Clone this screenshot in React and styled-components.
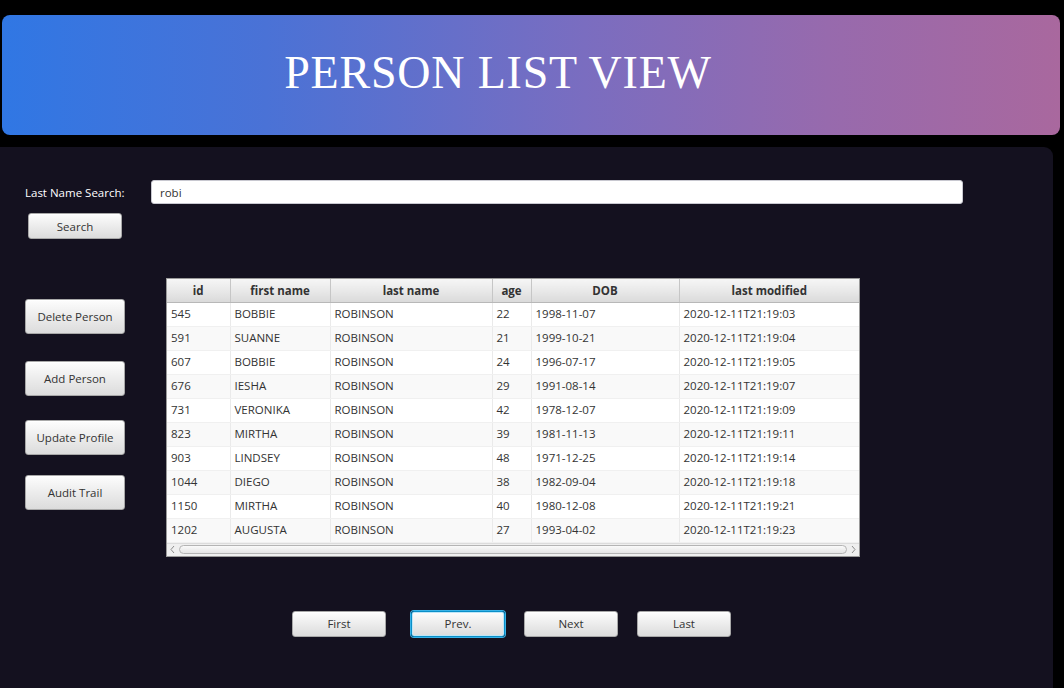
import React from 'react';
import styled, { createGlobalStyle, css } from 'styled-components';

const GlobalStyle = createGlobalStyle`
  html, body {
    margin: 0;
    padding: 0;
    background: #000;
  }
  body {
    font-family: "Open Sans", "Noto Sans", sans-serif;
  }
  * {
    box-sizing: border-box;
  }
`;

const people = [
  ['545', 'BOBBIE', 'ROBINSON', '22', '1998-11-07', '2020-12-11T21:19:03'],
  ['591', 'SUANNE', 'ROBINSON', '21', '1999-10-21', '2020-12-11T21:19:04'],
  ['607', 'BOBBIE', 'ROBINSON', '24', '1996-07-17', '2020-12-11T21:19:05'],
  ['676', 'IESHA', 'ROBINSON', '29', '1991-08-14', '2020-12-11T21:19:07'],
  ['731', 'VERONIKA', 'ROBINSON', '42', '1978-12-07', '2020-12-11T21:19:09'],
  ['823', 'MIRTHA', 'ROBINSON', '39', '1981-11-13', '2020-12-11T21:19:11'],
  ['903', 'LINDSEY', 'ROBINSON', '48', '1971-12-25', '2020-12-11T21:19:14'],
  ['1044', 'DIEGO', 'ROBINSON', '38', '1982-09-04', '2020-12-11T21:19:18'],
  ['1150', 'MIRTHA', 'ROBINSON', '40', '1980-12-08', '2020-12-11T21:19:21'],
  ['1202', 'AUGUSTA', 'ROBINSON', '27', '1993-04-02', '2020-12-11T21:19:23'],
];

const columns = [
  { title: 'id', width: 63 },
  { title: 'first name', width: 100 },
  { title: 'last name', width: 162 },
  { title: 'age', width: 39 },
  { title: 'DOB', width: 148 },
  { title: 'last modified', width: 180 },
];

const Page = styled.div`
  width: 1064px;
  height: 688px;
  display: flex;
  flex-direction: column;
  overflow: hidden;
  background: #000;
`;

const HeaderWrap = styled.div`
  padding: 15px 4px 12px 2px;
`;

const Banner = styled.header`
  height: 120px;
  border-radius: 8px;
  background: linear-gradient(to right, #3077e4 0%, #4a72d6 25%, #7a6dc0 55%, #976aad 78%, #a9689e 100%);
  display: flex;
  align-items: center;
  justify-content: center;
  padding: 0 66px 6px 0;
`;

const Title = styled.h1`
  margin: 0;
  font-family: "Liberation Serif", "Times New Roman", serif;
  font-weight: 400;
  font-size: 46px;
  letter-spacing: 0.8px;
  color: #fff;
`;

const Panel = styled.main`
  flex: 1;
  margin-right: 11px;
  background: #14111f;
  border-radius: 0 9px 0 0;
  padding-top: 33px;
  display: flex;
  flex-direction: column;
`;

const SearchRow = styled.div`
  display: grid;
  grid-template-columns: 126px 812px;
  align-items: center;
  padding-left: 25px;
`;

const Label = styled.label`
  color: #fff;
  font-size: 11.5px;
`;

const SearchInput = styled.input`
  height: 24px;
  border: 1px solid #c8c8d0;
  border-radius: 3px;
  background: #fff;
  padding: 0 8px;
  font-family: inherit;
  font-size: 11.5px;
  color: #333;
  outline: none;
`;

const buttonBase = css`
  font-family: "Open Sans", "Noto Sans", sans-serif;
  font-size: 11.5px;
  color: #333;
  border: 1px solid #a8a8a8;
  border-radius: 3px;
  background: linear-gradient(to bottom, #fdfdfd 0%, #ececec 50%, #dcdcdc 100%);
  box-shadow: inset 0 1px 0 #fff;
  padding: 0;
  cursor: pointer;
`;

const SearchButton = styled.button`
  ${buttonBase}
  width: 94px;
  height: 26px;
  margin: 9px 0 0 28px;
`;

const Content = styled.div`
  display: flex;
  margin-top: 39px;
  padding-left: 25px;
`;

const Actions = styled.div`
  width: 141px;
  display: flex;
  flex-direction: column;
`;

const ActionButton = styled.button`
  ${buttonBase}
  width: 100px;
  height: 35px;
  margin-top: ${(p) => p.$top}px;
`;

const TableBox = styled.div`
  width: 694px;
  border: 1px solid #9a9a9a;
  background: #fff;
`;

const Table = styled.table`
  width: 692px;
  border-collapse: collapse;
  table-layout: fixed;
  font-size: 11.5px;
  color: #333;
`;

const Th = styled.th`
  height: 23px;
  padding: 0;
  font-weight: 700;
  text-align: center;
  background: linear-gradient(to bottom, #f6f6f6 0%, #e6e6e6 60%, #dadada 100%);
  border-right: 1px solid #c6c6c6;
  border-bottom: 1px solid #b8b8b8;
  &:last-child {
    border-right: none;
  }
`;

const Tr = styled.tr`
  background: ${(p) => (p.$odd ? '#f9f9f9' : '#fff')};
`;

const Td = styled.td`
  height: 24px;
  padding: 0 0 1px 4px;
  border-right: 1px solid #eaeaea;
  border-bottom: 1px solid #f0f0f0;
  white-space: nowrap;
  overflow: hidden;
  &:last-child {
    border-right: none;
  }
`;

const ScrollBar = styled.div`
  height: 13px;
  display: flex;
  align-items: center;
  gap: 3px;
  padding: 0 2px;
  background: #efefef;
  border-top: 1px solid #dcdcdc;
`;

const Thumb = styled.div`
  flex: 1;
  height: 9px;
  border: 1px solid #b4b4b4;
  border-radius: 5px;
  background: linear-gradient(to bottom, #fafafa, #e4e4e4);
`;

const Arrow = ({ dir }) => (
  <svg width="7" height="9" viewBox="0 0 7 9">
    <path
      d={dir === 'left' ? 'M5 1 L2 4.5 L5 8' : 'M2 1 L5 4.5 L2 8'}
      fill="none"
      stroke="#8c8c8c"
      strokeWidth="1"
    />
  </svg>
);

const Pager = styled.div`
  display: flex;
  gap: 19px;
  margin-top: 54px;
  padding-left: 292px;
`;

const PageButton = styled.button`
  ${buttonBase}
  width: 94px;
  height: 26px;
  ${(p) =>
    p.$focused &&
    css`
      margin-left: 6px;
      border-color: #0a8fc8;
      box-shadow: 0 0 0 1px #39b2e6, inset 0 0 0 1px #bfe6f7;
    `}
`;

function App() {
  return (
    <>
      <GlobalStyle />
      <Page>
        <HeaderWrap>
          <Banner>
            <Title>PERSON LIST VIEW</Title>
          </Banner>
        </HeaderWrap>
        <Panel>
          <SearchRow>
            <Label htmlFor="lastName">Last Name Search:</Label>
            <SearchInput id="lastName" defaultValue="robi" />
          </SearchRow>
          <SearchButton>Search</SearchButton>
          <Content>
            <Actions>
              <ActionButton $top={21}>Delete Person</ActionButton>
              <ActionButton $top={27}>Add Person</ActionButton>
              <ActionButton $top={24}>Update Profile</ActionButton>
              <ActionButton $top={20}>Audit Trail</ActionButton>
            </Actions>
            <TableBox>
              <Table>
                <colgroup>
                  {columns.map((c) => (
                    <col key={c.title} style={{ width: c.width }} />
                  ))}
                </colgroup>
                <thead>
                  <tr>
                    {columns.map((c) => (
                      <Th key={c.title}>{c.title}</Th>
                    ))}
                  </tr>
                </thead>
                <tbody>
                  {people.map((row, i) => (
                    <Tr key={row[0]} $odd={i % 2 === 1}>
                      {row.map((cell, j) => (
                        <Td key={j}>{cell}</Td>
                      ))}
                    </Tr>
                  ))}
                </tbody>
              </Table>
              <ScrollBar>
                <Arrow dir="left" />
                <Thumb />
                <Arrow dir="right" />
              </ScrollBar>
            </TableBox>
          </Content>
          <Pager>
            <PageButton>First</PageButton>
            <PageButton $focused>Prev.</PageButton>
            <PageButton>Next</PageButton>
            <PageButton>Last</PageButton>
          </Pager>
        </Panel>
      </Page>
    </>
  );
}

export default App;
